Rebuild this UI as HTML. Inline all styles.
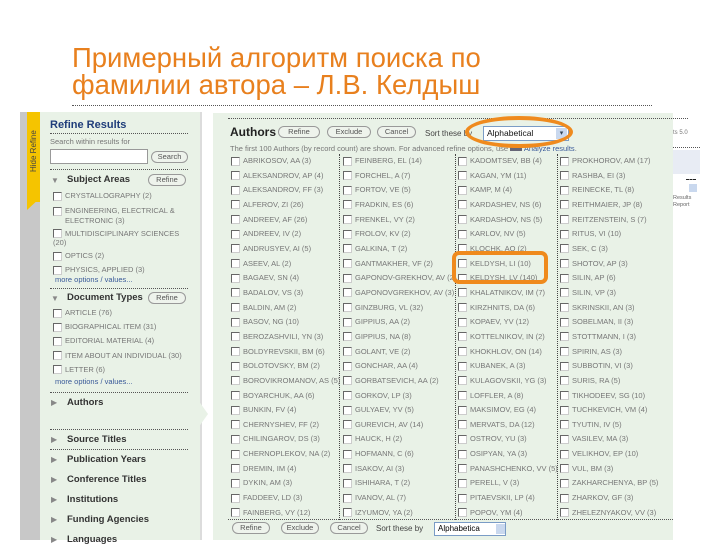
<!DOCTYPE html>
<html><head><meta charset="utf-8"><style>
*{margin:0;padding:0;box-sizing:border-box}
body{width:720px;height:540px;overflow:hidden;background:#fff;font-family:"Liberation Sans",sans-serif;position:relative}
.a{position:absolute}
.t{color:#e8801e;font-size:27.5px;line-height:27px;left:72px;top:44px;white-space:nowrap}
.dot{border-top:1px dotted #555}
.btn{position:absolute;height:12px;border:1px solid #999;border-radius:7px;background:#eef3ec;font-size:7.5px;color:#555;text-align:center;line-height:10px}
.cb{display:inline-block;width:9px;height:9px;border:1px solid #666;border-right-color:#ccc;border-bottom-color:#ccc;background:#fff;vertical-align:middle;margin-right:3px}
.col{position:absolute;top:154px;font-size:7.5px;color:#777;white-space:nowrap}
.col div{height:14.67px;line-height:14px}
.side{font-size:7.5px;color:#777;white-space:nowrap}
.hd{font-size:9.5px;font-weight:bold;color:#333}
.tri{color:#888;font-size:8px}
.more{color:#3a5a99;font-size:7.5px}
</style></head><body>
<div class="a t">Примерный алгоритм поиска по<br>фамилии автора – Л.В. Келдыш</div>
<div class="a dot" style="left:72px;top:105px;width:580px"></div>

<div class="a" style="left:20px;top:112px;width:20px;height:428px;background:#c8c8c8"></div>
<div class="a" style="left:27px;top:112px;width:13px;height:90px;background:#f5c400"></div>
<div class="a" style="left:27px;top:198px;width:0;height:0;border-left:13px solid #f5c400;border-bottom:12px solid transparent"></div>
<div class="a" style="left:27px;top:112px;width:13px;height:60px;font-size:8px;color:#444;writing-mode:vertical-rl;transform:rotate(180deg);text-align:left;line-height:13px">Hide Refine</div>
<div class="a" style="left:40px;top:112px;width:160px;height:428px;background:#e9f2e7"></div>
<div class="a" style="left:200px;top:112px;width:2px;height:428px;background:#dcdcdc"></div>
<div class="a" style="left:198px;top:400px;width:0;height:0;border-left:10px solid #e9f2e7;border-top:14px solid transparent;border-bottom:14px solid transparent"></div>

<div class="a" style="left:50px;top:119px;font-size:11px;font-weight:bold;color:#1f3d7a">Refine Results</div>
<div class="a dot" style="left:50px;top:133px;width:138px"></div>
<div class="a side" style="left:50px;top:137px">Search within results for</div>
<div class="a" style="left:50px;top:149px;width:98px;height:15px;background:#fff;border:1px solid #999"></div>
<div class="btn" style="left:151px;top:151px;width:37px">Search</div>
<div class="a dot" style="left:50px;top:169px;width:138px"></div>
<div class="a tri" style="left:51px;top:176px">▼</div><div class="a hd" style="left:67px;top:174px">Subject Areas</div>
<div class="btn" style="left:148px;top:174px;width:38px">Refine</div>
<div class="a side" style="left:53px;top:189px;line-height:14px">
<div><span class="cb"></span>CRYSTALLOGRAPHY (2)</div>
<div style="line-height:9px;margin-top:3px"><span class="cb"></span>ENGINEERING, ELECTRICAL &amp;<br><span style="margin-left:12px">ELECTRONIC (3)</span></div>
<div style="line-height:9px;margin-top:4px"><span class="cb"></span>MULTIDISCIPLINARY SCIENCES<br><span>(20)</span></div>
<div style="margin-top:2px"><span class="cb"></span>OPTICS (2)</div>
<div><span class="cb"></span>PHYSICS, APPLIED (3)</div>
</div>
<div class="a more" style="left:55px;top:275px">more options / values...</div>
<div class="a dot" style="left:50px;top:288px;width:138px"></div>
<div class="a tri" style="left:51px;top:294px">▼</div><div class="a hd" style="left:67px;top:292px">Document Types</div>
<div class="btn" style="left:148px;top:292px;width:38px">Refine</div>
<div class="a side" style="left:53px;top:306px;line-height:14.2px">
<div><span class="cb"></span>ARTICLE (76)</div>
<div><span class="cb"></span>BIOGRAPHICAL ITEM (31)</div>
<div><span class="cb"></span>EDITORIAL MATERIAL (4)</div>
<div><span class="cb"></span>ITEM ABOUT AN INDIVIDUAL (30)</div>
<div><span class="cb"></span>LETTER (6)</div>
</div>
<div class="a more" style="left:55px;top:377px">more options / values...</div>
<div class="a dot" style="left:50px;top:392px;width:138px"></div>
<div class="a tri" style="left:51px;top:398px">▶</div><div class="a hd" style="left:67px;top:397px">Authors</div>
<div class="a dot" style="left:50px;top:429px;width:138px"></div>
<div class="a tri" style="left:51px;top:435px">▶</div><div class="a hd" style="left:67px;top:434px">Source Titles</div>
<div class="a dot" style="left:50px;top:449px;width:138px"></div>
<div class="a tri" style="left:51px;top:455px">▶</div><div class="a hd" style="left:67px;top:454px">Publication Years</div>
<div class="a tri" style="left:51px;top:475px">▶</div><div class="a hd" style="left:67px;top:474px">Conference Titles</div>
<div class="a tri" style="left:51px;top:495px">▶</div><div class="a hd" style="left:67px;top:494px">Institutions</div>
<div class="a tri" style="left:51px;top:515px">▶</div><div class="a hd" style="left:67px;top:514px">Funding Agencies</div>
<div class="a tri" style="left:51px;top:535px">▶</div><div class="a hd" style="left:67px;top:534px">Languages</div>

<div class="a" style="left:213px;top:113px;width:460px;height:427px;background:#e9f2e7"></div>
<div class="a dot" style="left:228px;top:118px;width:460px"></div>
<div class="a" style="left:230px;top:125px;font-size:12px;font-weight:bold;color:#222">Authors</div>
<div class="btn" style="left:278px;top:126px;width:42px">Refine</div>
<div class="btn" style="left:327px;top:126px;width:44px">Exclude</div>
<div class="btn" style="left:377px;top:126px;width:39px">Cancel</div>
<div class="a" style="left:425px;top:129px;font-size:8px;color:#444">Sort these by</div>
<div class="a" style="left:483px;top:126px;width:86px;height:15px;background:#fff;border:1px solid #7a9cc6;font-size:8.5px;color:#111;padding:1px 3px">Alphabetical</div>
<div class="a" style="left:556px;top:128px;width:11px;height:11px;background:#c9d8ee;font-size:7px;color:#345;text-align:center;line-height:11px">▾</div>
<div class="a" style="left:230px;top:144px;font-size:7.5px;color:#777;white-space:nowrap">The first 100 Authors (by record count) are shown. For advanced refine options, use <span style="display:inline-block;width:12px;height:7px;background:#667"></span> <span style="color:#3a5a99">Analyze results</span>.</div>

<div class="a" style="left:339px;top:154px;height:366px;border-left:1px dotted #444"></div>
<div class="a" style="left:455px;top:154px;height:366px;border-left:1px dotted #444"></div>
<div class="a" style="left:557px;top:154px;height:366px;border-left:1px dotted #444"></div>

<div class="col" style="left:231px">
<div><span class="cb"></span>ABRIKOSOV, AA (3)</div><div><span class="cb"></span>ALEKSANDROV, AP (4)</div><div><span class="cb"></span>ALEKSANDROV, FF (3)</div><div><span class="cb"></span>ALFEROV, ZI (26)</div><div><span class="cb"></span>ANDREEV, AF (26)</div><div><span class="cb"></span>ANDREEV, IV (2)</div><div><span class="cb"></span>ANDRUSYEV, AI (5)</div><div><span class="cb"></span>ASEEV, AL (2)</div><div><span class="cb"></span>BAGAEV, SN (4)</div><div><span class="cb"></span>BADALOV, VS (3)</div><div><span class="cb"></span>BALDIN, AM (2)</div><div><span class="cb"></span>BASOV, NG (10)</div><div><span class="cb"></span>BEROZASHVILI, YN (3)</div><div><span class="cb"></span>BOLDYREVSKII, BM (6)</div><div><span class="cb"></span>BOLOTOVSKY, BM (2)</div><div><span class="cb"></span>BOROVIKROMANOV, AS (5)</div><div><span class="cb"></span>BOYARCHUK, AA (6)</div><div><span class="cb"></span>BUNKIN, FV (4)</div><div><span class="cb"></span>CHERNYSHEV, FF (2)</div><div><span class="cb"></span>CHILINGAROV, DS (3)</div><div><span class="cb"></span>CHERNOPLEKOV, NA (2)</div><div><span class="cb"></span>DREMIN, IM (4)</div><div><span class="cb"></span>DYKIN, AM (3)</div><div><span class="cb"></span>FADDEEV, LD (3)</div><div><span class="cb"></span>FAINBERG, VY (12)</div>
</div>
<div class="col" style="left:343px">
<div><span class="cb"></span>FEINBERG, EL (14)</div><div><span class="cb"></span>FORCHEL, A (7)</div><div><span class="cb"></span>FORTOV, VE (5)</div><div><span class="cb"></span>FRADKIN, ES (6)</div><div><span class="cb"></span>FRENKEL, VY (2)</div><div><span class="cb"></span>FROLOV, KV (2)</div><div><span class="cb"></span>GALKINA, T (2)</div><div><span class="cb"></span>GANTMAKHER, VF (2)</div><div><span class="cb"></span>GAPONOV-GREKHOV, AV (2)</div><div><span class="cb"></span>GAPONOVGREKHOV, AV (3)</div><div><span class="cb"></span>GINZBURG, VL (32)</div><div><span class="cb"></span>GIPPIUS, AA (2)</div><div><span class="cb"></span>GIPPIUS, NA (8)</div><div><span class="cb"></span>GOLANT, VE (2)</div><div><span class="cb"></span>GONCHAR, AA (4)</div><div><span class="cb"></span>GORBATSEVICH, AA (2)</div><div><span class="cb"></span>GORKOV, LP (3)</div><div><span class="cb"></span>GULYAEV, YV (5)</div><div><span class="cb"></span>GUREVICH, AV (14)</div><div><span class="cb"></span>HAUCK, H (2)</div><div><span class="cb"></span>HOFMANN, C (6)</div><div><span class="cb"></span>ISAKOV, AI (3)</div><div><span class="cb"></span>ISHIHARA, T (2)</div><div><span class="cb"></span>IVANOV, AL (7)</div><div><span class="cb"></span>IZYUMOV, YA (2)</div>
</div>
<div class="col" style="left:458px">
<div><span class="cb"></span>KADOMTSEV, BB (4)</div><div><span class="cb"></span>KAGAN, YM (11)</div><div><span class="cb"></span>KAMP, M (4)</div><div><span class="cb"></span>KARDASHEV, NS (6)</div><div><span class="cb"></span>KARDASHOV, NS (5)</div><div><span class="cb"></span>KARLOV, NV (5)</div><div><span class="cb"></span>KLOCHK, AO (2)</div><div><span class="cb"></span>KELDYSH, LI (10)</div><div><span class="cb"></span>KELDYSH, LV (140)</div><div><span class="cb"></span>KHALATNIKOV, IM (7)</div><div><span class="cb"></span>KIRZHNITS, DA (6)</div><div><span class="cb"></span>KOPAEV, YV (12)</div><div><span class="cb"></span>KOTTELNIKOV, IN (2)</div><div><span class="cb"></span>KHOKHLOV, ON (14)</div><div><span class="cb"></span>KUBANEK, A (3)</div><div><span class="cb"></span>KULAGOVSKII, YG (3)</div><div><span class="cb"></span>LOFFLER, A (8)</div><div><span class="cb"></span>MAKSIMOV, EG (4)</div><div><span class="cb"></span>MERVATS, DA (12)</div><div><span class="cb"></span>OSTROV, YU (3)</div><div><span class="cb"></span>OSIPYAN, YA (3)</div><div><span class="cb"></span>PANASHCHENKO, VV (5)</div><div><span class="cb"></span>PERELL, V (3)</div><div><span class="cb"></span>PITAEVSKII, LP (4)</div><div><span class="cb"></span>POPOV, YM (4)</div>
</div>
<div class="col" style="left:560px">
<div><span class="cb"></span>PROKHOROV, AM (17)</div><div><span class="cb"></span>RASHBA, EI (3)</div><div><span class="cb"></span>REINECKE, TL (8)</div><div><span class="cb"></span>REITHMAIER, JP (8)</div><div><span class="cb"></span>REITZENSTEIN, S (7)</div><div><span class="cb"></span>RITUS, VI (10)</div><div><span class="cb"></span>SEK, C (3)</div><div><span class="cb"></span>SHOTOV, AP (3)</div><div><span class="cb"></span>SILIN, AP (6)</div><div><span class="cb"></span>SILIN, VP (3)</div><div><span class="cb"></span>SKRINSKII, AN (3)</div><div><span class="cb"></span>SOBELMAN, II (3)</div><div><span class="cb"></span>STOTTMANN, I (3)</div><div><span class="cb"></span>SPIRIN, AS (3)</div><div><span class="cb"></span>SUBBOTIN, VI (3)</div><div><span class="cb"></span>SURIS, RA (5)</div><div><span class="cb"></span>TIKHODEEV, SG (10)</div><div><span class="cb"></span>TUCHKEVICH, VM (4)</div><div><span class="cb"></span>TYUTIN, IV (5)</div><div><span class="cb"></span>VASILEV, MA (3)</div><div><span class="cb"></span>VELIKHOV, EP (10)</div><div><span class="cb"></span>VUL, BM (3)</div><div><span class="cb"></span>ZAKHARCHENYA, BP (5)</div><div><span class="cb"></span>ZHARKOV, GF (3)</div><div><span class="cb"></span>ZHELEZNYAKOV, VV (3)</div>
</div>

<div class="a dot" style="left:228px;top:519px;width:445px"></div>
<div class="btn" style="left:232px;top:522px;width:38px">Refine</div>
<div class="btn" style="left:281px;top:522px;width:38px">Exclude</div>
<div class="btn" style="left:330px;top:522px;width:38px">Cancel</div>
<div class="a" style="left:376px;top:524px;font-size:8px;color:#444">Sort these by</div>
<div class="a" style="left:434px;top:522px;width:72px;height:14px;background:#fff;border:1px solid #7a9cc6;font-size:8px;padding:1px 3px">Alphabetica</div>
<div class="a" style="left:496px;top:524px;width:9px;height:10px;background:#c9d8ee"></div>

<div class="a dot" style="left:673px;top:147px;width:27px"></div>
<div class="a" style="left:673px;top:130px;font-size:6px;color:#777">ts 5.0</div>
<div class="a" style="left:673px;top:150px;width:27px;height:24px;background:#e8ecf4"></div>
<div class="a" style="left:686px;top:179px;width:10px;border-top:1px dashed #222"></div>
<div class="a" style="left:689px;top:184px;width:8px;height:8px;background:#c9d8ee"></div>
<div class="a" style="left:673px;top:195px;font-size:5.5px;color:#666;line-height:7px">Results<br>Report</div>

<div class="a" style="left:465px;top:116px;width:108px;height:32px;border:4px solid #ef8a1d;border-radius:50%"></div>
<div class="a" style="left:452px;top:251px;width:96px;height:33px;border:4px solid #ef8a1d;border-radius:7px"></div>
</body></html>
